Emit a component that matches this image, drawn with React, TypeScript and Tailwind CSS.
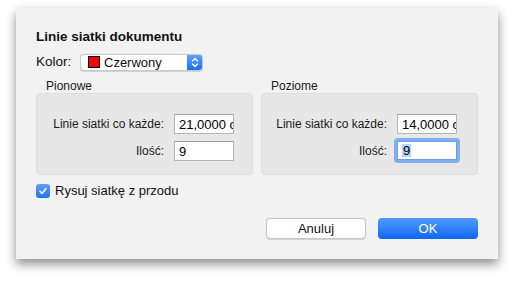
import React from "react";

const font = { fontFamily: '"Liberation Sans", Arial, sans-serif' };

function Field({ value, focused }: { value: string; focused?: boolean }) {
  if (focused) {
    return (
      <div className="rounded-[4px] bg-[#80aef0] p-[3px] -m-[3px]">
        <div className="h-[19px] w-[60px] bg-white border border-[#6d9fe6] flex items-center pl-[4px] text-[13px] leading-none text-black overflow-hidden whitespace-nowrap">
          <span className="bg-[#b2d2fb] px-[1px]">{value}</span>
        </div>
      </div>
    );
  }
  return (
    <div className="h-[20px] w-[60px] bg-white border border-[#b4b4b4] border-t-[#a0a0a0] flex items-center pl-[4px] text-[13px] leading-none text-black overflow-hidden whitespace-nowrap">
      {value}
    </div>
  );
}

function Group({ title, first, pr, focused }: { title: string; first: string; pr: string; focused?: boolean }) {
  return (
    <div className="w-[217px] flex flex-col">
      <div className="pl-[10px] h-[14px] leading-[14px] text-[12px] text-[#1a1a1a]">{title}</div>
      <div className={`h-[82px] rounded-[4px] bg-[#e7e7e7] border border-[#dedede] pt-[20px] ${pr}`}>
        <div className="flex flex-col items-end gap-[7px]">
          <div className="flex items-center gap-[10px]">
            <span className="text-[12px] text-[#1a1a1a]">Linie siatki co każde:</span>
            <Field value={first} />
          </div>
          <div className="flex items-center gap-[10px]">
            <span className="text-[12px] text-[#1a1a1a]">Ilość:</span>
            <Field value="9" focused={focused} />
          </div>
        </div>
      </div>
    </div>
  );
}

export default function App() {
  return (
    <div className="w-[514px] h-[283px] bg-white overflow-hidden" style={font}>
      <div className="ml-[16px] mt-[8px] w-[482px] h-[251px] bg-[#f2f2f2] shadow-[0_5px_10px_rgba(0,0,0,0.45)] px-[20px] pt-[21px] flex flex-col">
        <div className="text-[13.5px] leading-[16px] font-bold text-[#111]">Linie siatki dokumentu</div>
        <div className="mt-[8px] flex items-center h-[18px]">
          <span className="text-[13.5px] text-[#111] w-[44px]">Kolor:</span>
          <div className="flex h-[17px] w-[123px] rounded-[4px] bg-white border border-[#c8c8c8] shadow-[0_0.5px_1px_rgba(0,0,0,0.15)] overflow-hidden">
            <div className="flex-1 flex items-center pl-[7px] gap-[4px]">
              <div className="w-[12px] h-[12px] bg-[#ff0000] border border-black" />
              <span className="text-[13px] text-[#111] leading-none">Czerwony</span>
            </div>
            <div className="w-[15px] bg-gradient-to-b from-[#5aa0fb] to-[#1c6ff0] flex items-center justify-center">
              <svg width="8" height="11" viewBox="0 0 8 11" fill="none" stroke="white" strokeWidth="1.4" strokeLinecap="round" strokeLinejoin="round">
                <path d="M1.5 4 L4 1.5 L6.5 4" />
                <path d="M1.5 7 L4 9.5 L6.5 7" />
              </svg>
            </div>
          </div>
        </div>
        <div className="mt-[8px] flex gap-[8px]">
          <Group title="Pionowe" first="21,0000 cm" pr="pr-[18px]" />
          <Group title="Poziome" first="14,0000 cm" pr="pr-[20px]" focused />
        </div>
        <div className="mt-[8px] flex items-center gap-[5px] h-[16px]">
          <div className="w-[14px] h-[14px] rounded-[3px] bg-gradient-to-b from-[#5ea3fb] to-[#1f72f0] flex items-center justify-center">
            <svg width="10" height="10" viewBox="0 0 10 10" fill="none" stroke="white" strokeWidth="1.6" strokeLinecap="round" strokeLinejoin="round">
              <path d="M2 5.3 L4 7.5 L8 2.5" />
            </svg>
          </div>
          <span className="text-[13px] leading-[16px] text-[#111]">Rysuj siatkę z przodu</span>
        </div>
        <div className="mt-[19px] flex justify-end gap-[12px]">
          <div className="w-[100px] h-[21px] rounded-[4px] bg-white border border-[#c6c6c6] shadow-[0_0.5px_1px_rgba(0,0,0,0.15)] flex items-center justify-center text-[13px] text-[#111]">
            Anuluj
          </div>
          <div className="w-[100px] h-[21px] rounded-[4px] bg-gradient-to-b from-[#4f99fb] to-[#0c66f6] flex items-center justify-center text-[13px] text-white">
            OK
          </div>
        </div>
      </div>
    </div>
  );
}
